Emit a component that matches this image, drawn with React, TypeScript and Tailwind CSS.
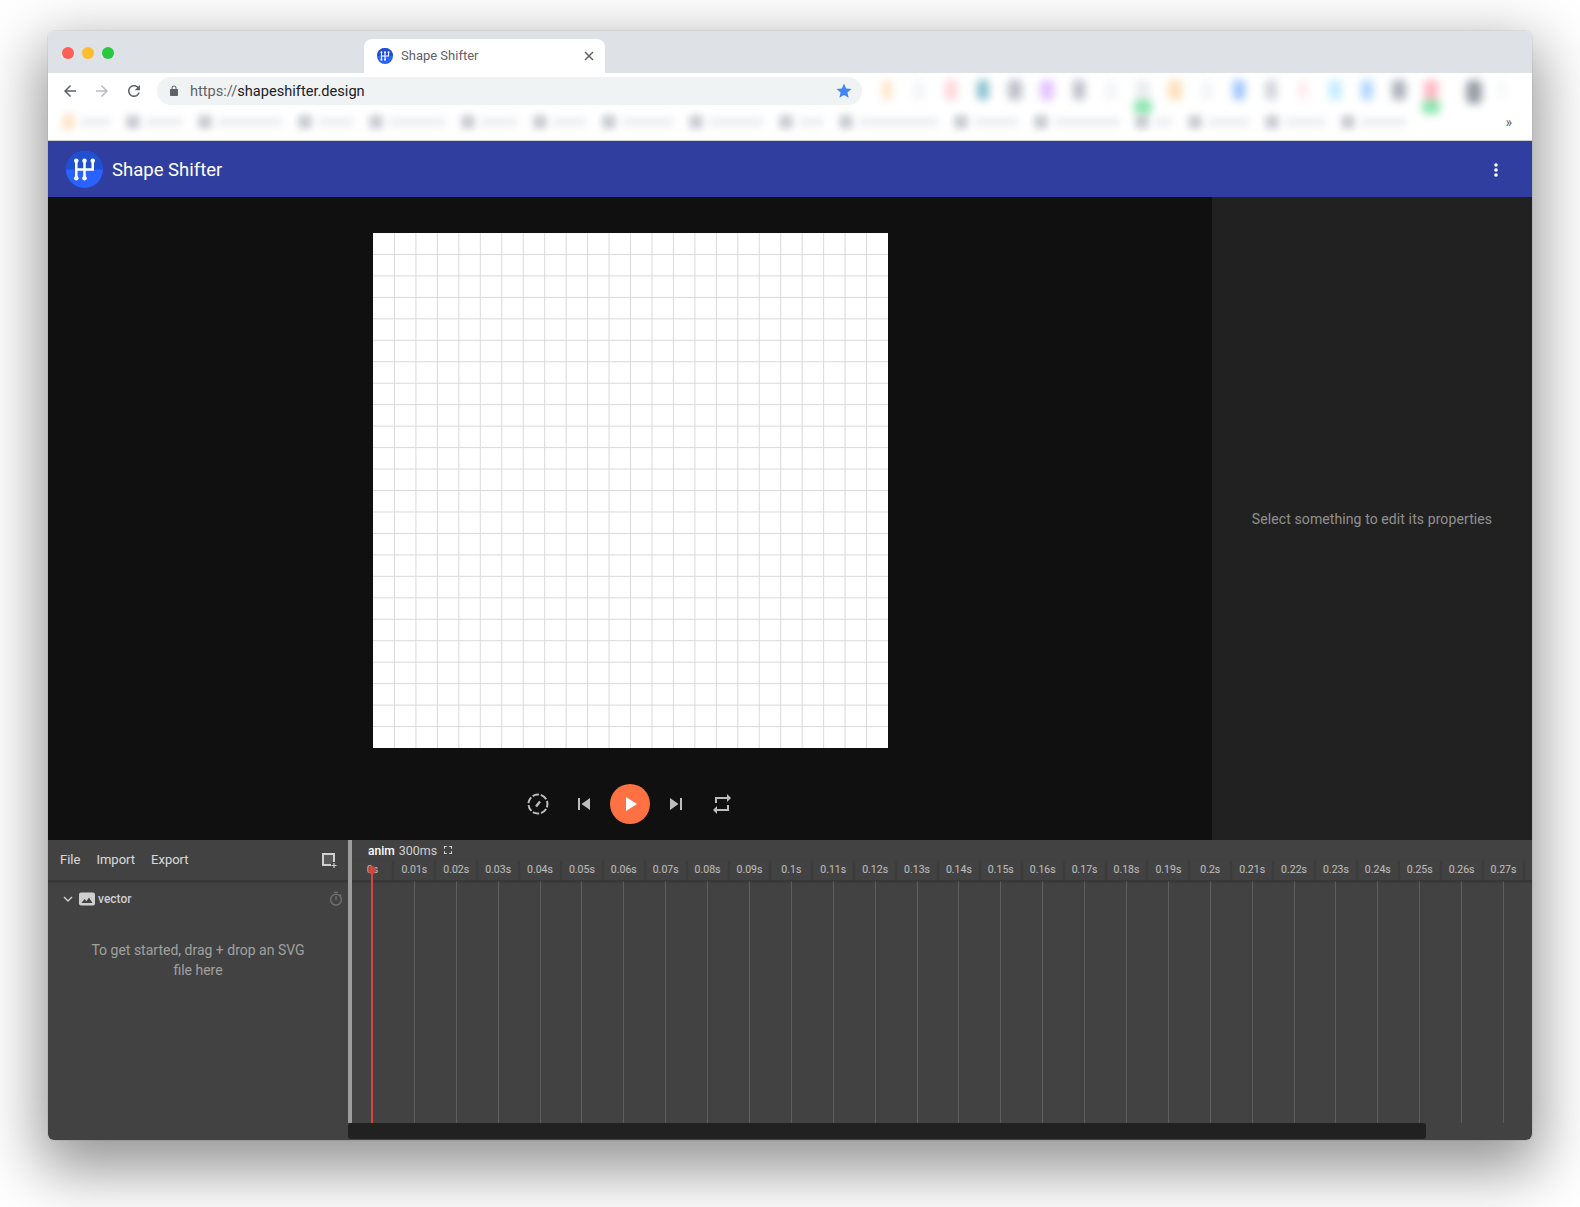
const FONT = "font-['Roboto','Liberation_Sans',sans-serif]"

const toolbarBlurs = [
  { w: 8, c: "bg-orange-300" },
  { w: 10, c: "bg-gray-200" },
  { w: 12, c: "bg-rose-300" },
  { w: 12, c: "bg-cyan-700" },
  { w: 14, c: "bg-gray-500" },
  { w: 14, c: "bg-purple-400" },
  { w: 12, c: "bg-gray-500" },
  { w: 10, c: "bg-gray-200" },
  { w: 14, c: "bg-gray-300" },
  { w: 14, c: "bg-orange-300" },
  { w: 10, c: "bg-gray-200" },
  { w: 12, c: "bg-blue-500" },
  { w: 12, c: "bg-gray-400" },
  { w: 8, c: "bg-rose-200" },
  { w: 12, c: "bg-sky-300" },
  { w: 12, c: "bg-blue-400" },
  { w: 14, c: "bg-gray-600" },
  { w: 14, c: "bg-rose-400" },
]

const bookmarks = [48, 56, 84, 55, 76, 56, 53, 71, 74, 44, 99, 64, 85, 37, 61, 60, 65]

const ticks = Array.from({ length: 28 }, (_, i) => {
  if (i === 0) return "0s"
  return `${i / 100}s`
})

const gridLines = Array.from({ length: 23 }, (_, i) => (i + 1) * (515 / 24))

function Logo({ size }: { size: number }) {
  return (
    <svg width={size} height={size} viewBox="0 0 36 36">
      <circle cx="18" cy="18" r="18" fill="#2962ff" />
      <path d="M0 18a18 18 0 0 1 36 0z" fill="#2050d0" />
      <g stroke="#fff" strokeWidth="2.5" fill="none">
        <path d="M10 10v16M18 10v16M26 10v8H10" />
      </g>
      <g fill="#fff">
        <circle cx="10" cy="9.5" r="2.2" />
        <circle cx="18" cy="9.5" r="2.2" />
        <circle cx="26" cy="9.5" r="2.2" />
        <circle cx="10" cy="26.5" r="2.2" />
        <circle cx="18" cy="26.5" r="2.2" />
      </g>
    </svg>
  )
}

function Icon({ d, size = 24, className }: { d: string; size?: number; className?: string }) {
  return (
    <svg width={size} height={size} viewBox="0 0 24 24" fill="currentColor" className={className}>
      <path d={d} />
    </svg>
  )
}

function BrowserChrome() {
  return (
    <>
      <div className="h-[42px] bg-[#dee1e6] flex pl-[13px] pt-[8px] relative">
        <div className="flex gap-2 pt-[8px] pl-[0.5px] w-[303px]">
          <div className="w-3 h-3 rounded-full bg-[#ff5f57]" />
          <div className="w-3 h-3 rounded-full bg-[#febc2e]" />
          <div className="w-3 h-3 rounded-full bg-[#28c840]" />
        </div>
        <div className="w-[241px] h-[34px] bg-white rounded-t-lg flex items-center pl-[13px] pr-[10px] gap-2">
          <Logo size={16} />
          <span className="text-[13px] text-[#5f6368] flex-1">Shape Shifter</span>
          <svg width="12" height="12" viewBox="0 0 12 12" stroke="#5f6368" strokeWidth="1.5">
            <path d="M2 2l8 8M10 2l-8 8" />
          </svg>
        </div>
      </div>
      <div className="h-[32px] bg-white flex items-start pl-[13px] pt-[4px] relative">
        <Icon d="M20 11H7.83l5.59-5.59L12 4l-8 8 8 8 1.41-1.41L7.83 13H20v-2z" size={18} className="text-[#5f6368] mt-[5px]" />
        <Icon d="M12 4l-1.41 1.41L16.17 11H4v2h12.17l-5.58 5.59L12 20l8-8z" size={18} className="text-[#b9bcc0] mt-[5px] ml-[14px]" />
        <Icon d="M17.65 6.35C16.2 4.9 14.21 4 12 4c-4.42 0-7.99 3.58-7.99 8s3.57 8 7.99 8c3.73 0 6.84-2.55 7.73-6h-2.08c-.82 2.33-3.04 4-5.65 4-3.31 0-6-2.69-6-6s2.69-6 6-6c1.66 0 3.14.69 4.22 1.78L13 11h7V4l-2.35 2.35z" size={18} className="text-[#5f6368] mt-[5px] ml-[14px]" />
        <div className="ml-[14px] w-[705px] h-[28px] bg-[#f0f3f4] rounded-full flex items-center pl-[11px] pr-[9px]">
          <Icon d="M18 8h-1V6c0-2.76-2.24-5-5-5S7 3.24 7 6v2H6c-1.1 0-2 .9-2 2v10c0 1.1.9 2 2 2h12c1.1 0 2-.9 2-2V10c0-1.1-.9-2-2-2zM9 6c0-1.66 1.34-3 3-3s3 1.34 3 3v2H9V6z" size={12} className="text-[#5f6368]" />
          <span className="text-[14.6px] ml-[10px] pt-[2px] flex-1 text-[#202124]">
            <span className="text-[#5f6368]">https://</span>shapeshifter.design
          </span>
          <Icon d="M12 17.27L18.18 21l-1.64-7.03L22 9.24l-7.19-.61L12 2 9.19 8.63 2 9.24l5.46 4.73L5.82 21z" size={18} className="text-[#4285f4]" />
        </div>
        <div className="ml-[9px] flex mt-[3px] blur-[4px] opacity-45">
          {toolbarBlurs.map((b, i) => (
            <div key={i} className="w-[32px] flex flex-col items-center">
              <div className={`h-[20px] rounded-sm ${b.c}`} style={{ width: b.w }} />
              {(i === 8 || i === 17) && <div className="w-[18px] h-[14px] rounded-sm bg-green-500" />}
            </div>
          ))}
          <div className="w-[46px] pl-[8px] flex justify-center">
            <div className="w-[16px] h-[24px] rounded-md bg-gray-800" />
          </div>
          <div className="w-[18px] flex justify-center">
            <div className="w-[6px] h-[18px] bg-gray-200" />
          </div>
        </div>
      </div>
      <div className="h-[36px] bg-white border-b border-[#cfcfcf] flex items-center pl-[14px] pb-[2px]">
        <div className="flex gap-[16px] flex-1 blur-[3.5px] opacity-35">
          {bookmarks.map((w, i) => (
            <div key={i} className="flex items-center gap-[6px]" style={{ width: w }}>
              <div className={i === 0 ? "w-[13px] h-[16px] rounded-sm bg-orange-300 shrink-0" : "w-[14px] h-[14px] rounded-sm bg-gray-500 shrink-0"} />
              <div className="h-[10px] flex-1 bg-gray-300" />
            </div>
          ))}
        </div>
        <span className="text-[14px] leading-none text-[#5f6368] pr-[20px]">»</span>
      </div>
    </>
  )
}

function AppHeader() {
  return (
    <div className="h-[56px] bg-[#303f9f] flex items-center pl-[18px] pr-[34px] text-white">
      <Logo size={37} />
      <span className="text-[18.5px] ml-[9px] pt-[3px] flex-1">Shape Shifter</span>
      <svg width="4" height="14" viewBox="0 0 4 14" fill="#fff" className="mt-[1px]">
        <circle cx="2" cy="2" r="1.8" />
        <circle cx="2" cy="7" r="1.8" />
        <circle cx="2" cy="12" r="1.8" />
      </svg>
    </div>
  )
}

function Canvas() {
  return (
    <svg width="515" height="515" viewBox="0 0 515 515" className="bg-white block">
      {gridLines.map((p) => (
        <g key={p} stroke="#dadada" strokeWidth="1">
          <line x1={p} y1="0" x2={p} y2="515" />
          <line x1="0" y1={p} x2="515" y2={p} />
        </g>
      ))}
    </svg>
  )
}

function PlaybackControls() {
  return (
    <div className="flex items-center justify-center text-[#bdbdbd] mt-[36px]">
      <div className="w-[46px] flex justify-center">
        <svg width="24" height="24" viewBox="0 0 24 24" fill="none" stroke="currentColor" strokeWidth="2">
          <circle cx="12" cy="12" r="9.5" strokeDasharray="6.5 1.9" transform="rotate(-70 12 12)" />
          <path d="M10 14.5l4-5" strokeWidth="2.4" />
        </svg>
      </div>
      <div className="w-[46px] flex justify-center">
        <Icon d="M6 6h2v12H6zm3.5 6l8.5 6V6z" />
      </div>
      <div className="w-[46px] flex justify-center">
        <div className="w-10 h-10 rounded-full bg-[#ff7043] flex items-center justify-center text-white">
          <Icon d="M8 5v14l11-7z" />
        </div>
      </div>
      <div className="w-[46px] flex justify-center">
        <Icon d="M6 18l8.5-6L6 6v12zM16 6v12h2V6h-2z" />
      </div>
      <div className="w-[46px] flex justify-center">
        <Icon d="M7 7h10v3l4-4-4-4v3H5v6h2V7zm10 10H7v-3l-4 4 4 4v-3h12v-6h-2v4z" />
      </div>
    </div>
  )
}

function LayerPanel() {
  return (
    <div className="w-[300px] flex flex-col">
      <div className="h-[41px] border-b border-[#383838] shadow-[0_1px_2px_rgba(0,0,0,0.25)] flex items-center pl-[12px] pr-[11px] text-[13px] text-white/80">
        <span>File</span>
        <span className="ml-[16px]">Import</span>
        <span className="ml-[16px] flex-1">Export</span>
        <svg width="16" height="16" viewBox="0 0 16 16" fill="none" className="text-[#d0d0d0]">
          <path d="M2 2h11v11H2z" stroke="currentColor" strokeWidth="2" fill="#585858" />
          <path d="M13 10v6M10 13h6" stroke="#424242" strokeWidth="4" />
          <path d="M13 11v5M10.5 13.5h5" stroke="currentColor" strokeWidth="1.2" />
        </svg>
      </div>
      <div className="h-[36px] flex items-center pl-[14px] pr-[4px] text-[12px] font-medium text-white/75">
        <svg width="12" height="12" viewBox="0 0 12 12" fill="none" stroke="currentColor" strokeWidth="1.4">
          <path d="M2 4l4 4 4-4" />
        </svg>
        <svg width="16" height="14" viewBox="0 0 16 14" className="ml-[5px]">
          <rect width="16" height="13" y="0.5" rx="2" fill="#cfcfcf" />
          <path d="M2.5 11l3-4 2 2.2L10 5.5l3.5 5.5z" fill="#424242" />
        </svg>
        <span className="ml-[3px] flex-1">vector</span>
        <Icon d="M15 1H9v2h6V1zm-4 13h2V8h-2v6zm8.03-6.61l1.42-1.42c-.43-.51-.9-.99-1.41-1.41l-1.42 1.42C16.07 4.74 14.12 4 12 4c-4.97 0-9 4.03-9 9s4.02 9 9 9 9-4.03 9-9c0-2.12-.74-4.07-1.97-5.61zM12 20c-3.87 0-7-3.13-7-7s3.13-7 7-7 7 3.13 7 7-3.13 7-7 7z" size={16} className="text-white/25" />
      </div>
      <div className="mt-[23px] px-[40px] text-center text-[14px] leading-[20px] text-white/50">
        To get started, drag + drop an SVG file here
      </div>
    </div>
  )
}

function TimelinePanel() {
  return (
    <div className="flex-1 flex flex-col min-w-0 overflow-hidden">
      <div className="h-[20px] flex items-center pl-[16px] text-[12px] text-white/75 pt-[2px]">
        <span className="font-medium text-white">anim</span>
        <span className="ml-[4px] text-[12.5px]">300ms</span>
        <svg width="14" height="14" viewBox="0 0 24 24" fill="currentColor" className="ml-[4px] -mt-[2px]">
          <path d="M7 14H5v5h5v-2H7v-3zm-2-4h2V7h3V5H5v5zm12 7h-3v2h5v-5h-2v3zM14 5v2h3v3h2V5h-5z" />
        </svg>
      </div>
      <div className="flex-1 flex -ml-[0.5px]">
        {ticks.map((t, i) => (
          <div key={t} className="w-[41.9px] shrink-0 flex flex-col items-center relative">
            <div className="h-[21px] w-full border-b border-[#383838] shadow-[0_1px_2px_rgba(0,0,0,0.25)] flex items-center justify-center text-[10.5px] text-white/65 whitespace-nowrap">
              {t}
            </div>
            <div className={i === 0 ? "w-[2px] flex-1 bg-[#d9453a]" : "w-px flex-1 bg-white/15"} />
            {i === 0 && (
              <>
                <div className="absolute top-[6px] left-1/2 -ml-[4px] w-2 h-2 rounded-full bg-[#d9453a]/85" />
                <div className="absolute top-[10px] left-1/2 -ml-px w-[2px] h-[12px] bg-[#d9453a]" />
              </>
            )}
          </div>
        ))}
        <div className="flex-1">
          <div className="h-[21px] border-b border-[#383838] shadow-[0_1px_2px_rgba(0,0,0,0.25)]" />
        </div>
      </div>
    </div>
  )
}

export default function App() {
  return (
    <div className={`w-[1580px] h-[1207px] bg-white pt-[31px] pl-[48px] overflow-hidden ${FONT}`}>
      <div className="w-[1484px] h-[1109px] flex flex-col rounded-[6px] overflow-hidden shadow-[0_22px_60px_8px_rgba(0,0,0,0.42)] outline outline-black/5">
        <BrowserChrome />
        <AppHeader />
        <div className="h-[643px] flex">
          <div className="flex-1 bg-[#101010] flex flex-col items-center pt-[36px]">
            <Canvas />
            <PlaybackControls />
          </div>
          <div className="w-[320px] bg-[#212121] flex items-center justify-center pt-[2px] text-[14px] tracking-[0.1px] text-white/50">
            Select something to edit its properties
          </div>
        </div>
        <div className="flex-1 bg-[#424242] flex flex-col">
          <div className="flex-1 flex">
            <LayerPanel />
            <div className="w-[4px] bg-[#9e9e9e]" />
            <TimelinePanel />
          </div>
          <div className="h-[17px] flex">
            <div className="w-[300px]" />
            <div className="w-[1078px] h-[16px] bg-[#212121] rounded-[3px]" />
          </div>
        </div>
      </div>
    </div>
  )
}
